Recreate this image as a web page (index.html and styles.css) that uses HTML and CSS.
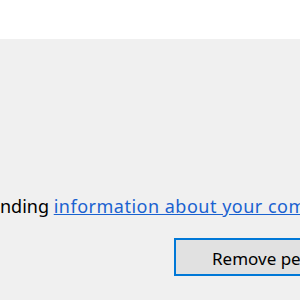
FILE: index.html
```html
<!DOCTYPE html>
<html lang="en">

<head>
  <meta charset="UTF-8">
  <title>Remove</title>
  <link rel="stylesheet" href="styles.css">
</head>

<body>
  <div class="cabecera"></div>
  <div class="contenido">
    <p class="linea">nding <a href="#">information about your computer</a></p>
    <div class="botones">
      <button type="button" class="boton">Remove personal information</button>
    </div>
  </div>
</body>

</html>
```

FILE: styles.css
```css
html, body {
  margin: 0;
  height: 100%;
  overflow: hidden;
}

body {
  background-color: #f0f0f0;
  font-family: "Noto Sans", "Open Sans", sans-serif;
  font-size: 18px;
  color: #000;
}

.cabecera {
  height: 39px;
  background-color: #fff;
}

.contenido {
  padding-top: 155px;
  white-space: nowrap;
}

.linea {
  margin: 0;
  line-height: 24px;
}

.linea a {
  color: #1a62d0;
  letter-spacing: 0.5px;
}

.botones {
  padding-top: 20px;
  padding-left: 174px;
}

.boton {
  height: 38px;
  padding: 3px 36px 0;
  border: 2px solid #0078d7;
  background-color: #e1e1e1;
  font-family: "Noto Sans", sans-serif;
  font-size: 17px;
  color: #000;
}
```
